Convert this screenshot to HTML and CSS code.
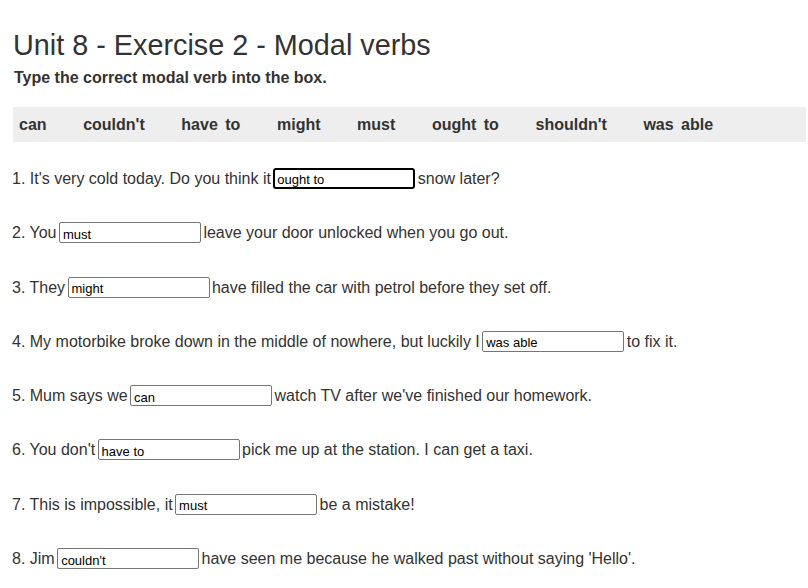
FILE: index.html
```html
<!DOCTYPE html>
<html lang="en">
<head>
<meta charset="utf-8">
<title>Unit 8 - Exercise 2 - Modal verbs</title>
<link rel="stylesheet" href="styles.css">
</head>
<body>
<div class="page">
  <h1 class="title">Unit 8 - Exercise 2 - Modal verbs</h1>
  <p class="instr">Type the correct modal verb into the box.</p>
  <div class="bank">
    <span>can</span><span>couldn't</span><span>have to</span><span>might</span><span>must</span><span>ought to</span><span>shouldn't</span><span>was able</span>
  </div>
  <div class="questions">
    <p class="q">1. It's very cold today. Do you think it <input class="box focused" type="text" value="ought to"> snow later?</p>
    <p class="q">2. You <input class="box" type="text" value="must"> leave your door unlocked when you go out.</p>
    <p class="q">3. They <input class="box" type="text" value="might"> have filled the car with petrol before they set off.</p>
    <p class="q">4. My motorbike broke down in the middle of nowhere, but luckily I <input class="box" type="text" value="was able"> to fix it.</p>
    <p class="q">5. Mum says we <input class="box" type="text" value="can"> watch TV after we've finished our homework.</p>
    <p class="q">6. You don't <input class="box" type="text" value="have to"> pick me up at the station. I can get a taxi.</p>
    <p class="q">7. This is impossible, it <input class="box" type="text" value="must"> be a mistake!</p>
    <p class="q">8. Jim <input class="box" type="text" value="couldn't"> have seen me because he walked past without saying 'Hello'.</p>
  </div>
</div>
</body>
</html>
```
FILE: styles.css
```css
html, body {
  margin: 0;
  padding: 0;
  background: #fff;
}
body {
  font-family: "Liberation Sans", Arial, sans-serif;
  color: #333;
}
.page {
  padding: 28px 2px 0 13px;
}
.title {
  margin: 0;
  font-size: 28.8px;
  font-weight: normal;
  line-height: 34px;
}
.instr {
  margin: 6px 0 0 1px;
  font-size: 16px;
  font-weight: bold;
  line-height: 20px;
}
.bank {
  margin-top: 19px;
  background: #eee;
  height: 35px;
  display: flex;
  align-items: center;
  gap: 36.6px;
  padding-left: 6px;
  font-size: 16px;
  font-weight: bold;
}
.bank span {
  word-spacing: 3px;
}
.questions {
  margin-top: 27px;
  display: flex;
  flex-direction: column;
  gap: 34.3px;
}
.q {
  margin: 0;
  font-size: 16px;
  line-height: 20px;
  height: 20px;
  white-space: nowrap;
  margin-left: -1px;
}
.box {
  box-sizing: border-box;
  width: 142px;
  height: 21px;
  padding: 3px 3px 0;
  margin: -1px -2px 0;
  border: 1px solid #767676;
  border-radius: 2px;
  font-family: "Liberation Sans", Arial, sans-serif;
  font-size: 13px;
  color: #000;
  vertical-align: top;
  background: #fff;
}
.box.focused {
  border: 2px solid #000;
  border-radius: 3px;
  padding: 2px 2px 0;
}
```
